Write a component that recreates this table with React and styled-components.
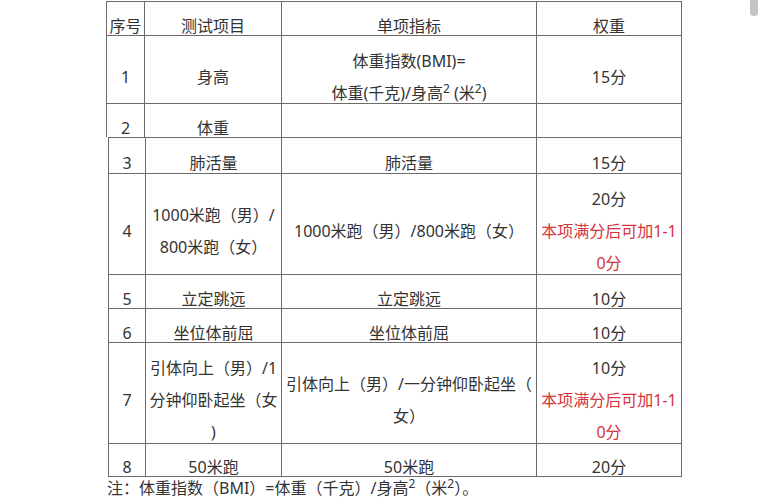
import React from "react"
import styled, { createGlobalStyle } from "styled-components"

const GlobalStyle = createGlobalStyle`
  body {
    margin: 0;
    background: #ffffff;
    font-family: "Noto Sans", "Noto Sans CJK SC", sans-serif;
    color: #333333;
  }
`

const Page = styled.div`
  position: relative;
  width: 763px;
  height: 500px;
  overflow: hidden;
  padding: 1px 0 0 106px;
  box-sizing: border-box;
`

const Scroll = styled.div`
  position: absolute;
  top: 0;
  right: 5px;
  width: 8px;
  height: 16px;
  border-radius: 0 0 4px 4px;
  background: #c4c4c4;
`

const Table = styled.div`
  display: grid;
  grid-template-columns: ${({ cols }) => cols};
  grid-template-rows: ${({ rows }) => rows};
  width: max-content;
  margin-left: ${({ shift }) => shift || 0}px;
  border-left: 1px solid #6b6b6b;
  border-top: 1px solid #6b6b6b;
`

const Cell = styled.div`
  display: flex;
  flex-direction: column;
  justify-content: center;
  align-items: center;
  box-sizing: border-box;
  overflow: hidden;
  border-right: 1px solid #6b6b6b;
  border-bottom: ${({ open }) => (open ? "none" : "1px solid #6b6b6b")};
  font-size: 16px;
  white-space: nowrap;
  text-align: center;
`

const Line = styled.div`
  height: 32px;
  flex: none;
  box-sizing: border-box;
  padding-top: 15px;
  line-height: 17px;
  color: ${({ red }) => (red ? "#d4343c" : "#333333")};
`

const Sup = styled.sup`
  font-size: 12px;
  line-height: 0;
  vertical-align: 6px;
`

const Note = styled.div`
  margin-top: 3px;
  margin-left: 1px;
  font-size: 16px;
  line-height: 17px;
  white-space: nowrap;
`

const upperRows = [
  [["序号"], ["测试项目"], ["单项指标"], ["权重"]],
  [
    ["1"],
    ["身高"],
    [
      "体重指数(BMI)=",
      <>
        体重(千克)/身高<Sup>2</Sup> (米<Sup>2</Sup>)
      </>,
    ],
    ["15分"],
  ],
  [["2"], ["体重"], [], []],
]

const lowerRows = [
  [["3"], ["肺活量"], ["肺活量"], ["15分"]],
  [
    ["4"],
    ["1000米跑（男）/", "800米跑（女）"],
    ["1000米跑（男）/800米跑（女）"],
    ["20分", { red: "本项满分后可加1-1" }, { red: "0分" }],
  ],
  [["5"], ["立定跳远"], ["立定跳远"], ["10分"]],
  [["6"], ["坐位体前屈"], ["坐位体前屈"], ["10分"]],
  [
    ["7"],
    ["引体向上（男）/1", "分钟仰卧起坐（女", ")"],
    ["引体向上（男）/一分钟仰卧起坐（", "女）"],
    ["10分", { red: "本项满分后可加1-1" }, { red: "0分" }],
  ],
  [["8"], ["50米跑"], ["50米跑"], ["20分"]],
]

const Lines = ({ lines }) =>
  lines.map((l, i) =>
    l && l.red ? (
      <Line key={i} red>
        {l.red}
      </Line>
    ) : (
      <Line key={i}>{l}</Line>
    )
  )

const Grid = ({ rows, cols, heights, shift, openLast }) => (
  <Table cols={cols} rows={heights} shift={shift}>
    {rows.map((row, r) =>
      row.map((cell, c) => (
        <Cell key={r + "-" + c} open={openLast && r === rows.length - 1}>
          <Lines lines={cell} />
        </Cell>
      ))
    )}
  </Table>
)

export default function App() {
  return (
    <Page>
      <GlobalStyle />
      <Scroll />
      <Grid
        rows={upperRows}
        cols="38px 137px 255px 145px"
        heights="34px 68px 33px"
        openLast
      />
      <Grid
        rows={lowerRows}
        cols="37px 136px 255px 145px"
        heights="36px 101px 34px 34px 101px 33px"
        shift={2}
      />
      <Note>
        注：体重指数（BMI）=体重（千克）/身高<Sup>2</Sup>（米<Sup>2</Sup>）。
      </Note>
    </Page>
  )
}
